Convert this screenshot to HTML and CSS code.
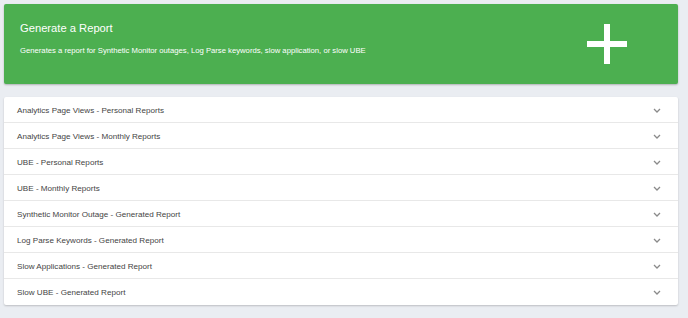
FILE: index.html
```html
<!DOCTYPE html>
<html lang="en">
<head>
    <meta charset="UTF-8">
    <meta name="viewport" content="width=device-width, initial-scale=1.0">
    <title>Reports</title>
    <link rel="stylesheet" href="styles.css">
</head>
<body>
    <div class="container">
        <a href="#" class="generate-card">
            <div class="generate-info">
                <h1>Generate a Report</h1>
                <p>Generates a report for Synthetic Monitor outages, Log Parse keywords, slow application, or slow UBE</p>
            </div>
            <svg class="plus-icon" width="40" height="40" viewBox="0 0 40 40">
                <rect x="17" y="0" width="6" height="40" fill="#fff"/>
                <rect x="0" y="17" width="40" height="6" fill="#fff"/>
            </svg>
        </a>

        <main class="report-list">
            <div class="report-row">
                <span>Analytics Page Views - Personal Reports</span>
                <svg class="chevron" width="8" height="5" viewBox="0 0 8 5"><path d="M1 1 L4 4 L7 1" fill="none" stroke="#8a8a8a" stroke-width="1.3"/></svg>
            </div>
            <div class="report-row">
                <span>Analytics Page Views - Monthly Reports</span>
                <svg class="chevron" width="8" height="5" viewBox="0 0 8 5"><path d="M1 1 L4 4 L7 1" fill="none" stroke="#8a8a8a" stroke-width="1.3"/></svg>
            </div>
            <div class="report-row">
                <span>UBE - Personal Reports</span>
                <svg class="chevron" width="8" height="5" viewBox="0 0 8 5"><path d="M1 1 L4 4 L7 1" fill="none" stroke="#8a8a8a" stroke-width="1.3"/></svg>
            </div>
            <div class="report-row">
                <span>UBE - Monthly Reports</span>
                <svg class="chevron" width="8" height="5" viewBox="0 0 8 5"><path d="M1 1 L4 4 L7 1" fill="none" stroke="#8a8a8a" stroke-width="1.3"/></svg>
            </div>
            <div class="report-row">
                <span>Synthetic Monitor Outage - Generated Report</span>
                <svg class="chevron" width="8" height="5" viewBox="0 0 8 5"><path d="M1 1 L4 4 L7 1" fill="none" stroke="#8a8a8a" stroke-width="1.3"/></svg>
            </div>
            <div class="report-row">
                <span>Log Parse Keywords - Generated Report</span>
                <svg class="chevron" width="8" height="5" viewBox="0 0 8 5"><path d="M1 1 L4 4 L7 1" fill="none" stroke="#8a8a8a" stroke-width="1.3"/></svg>
            </div>
            <div class="report-row">
                <span>Slow Applications - Generated Report</span>
                <svg class="chevron" width="8" height="5" viewBox="0 0 8 5"><path d="M1 1 L4 4 L7 1" fill="none" stroke="#8a8a8a" stroke-width="1.3"/></svg>
            </div>
            <div class="report-row">
                <span>Slow UBE - Generated Report</span>
                <svg class="chevron" width="8" height="5" viewBox="0 0 8 5"><path d="M1 1 L4 4 L7 1" fill="none" stroke="#8a8a8a" stroke-width="1.3"/></svg>
            </div>
        </main>
    </div>
</body>
</html>
```

FILE: styles.css
```css
:root {
    --green: #4caf50;
    --bg-color: #eaedf2;
    --text-color: #444;
    --line-color: #e8e8e8;
}

* {
    margin: 0;
    padding: 0;
    box-sizing: border-box;
    font-family: 'Liberation Sans', Arial, sans-serif;
}

body {
    background-color: var(--bg-color);
    color: var(--text-color);
    min-height: 100vh;
}

.container {
    width: 688px;
    padding: 4px 10px 0 4px;
}

.generate-card {
    background: var(--green);
    color: #fff;
    height: 80px;
    border-radius: 2px;
    text-decoration: none;
    display: flex;
    justify-content: space-between;
    padding: 0 51px 0 16px;
    box-shadow: 0 1px 2px rgba(0, 0, 0, 0.25);
}

.generate-info h1 {
    font-size: 11.2px;
    font-weight: 400;
    margin-top: 17px;
    line-height: 14px;
}

.generate-info p {
    font-size: 7.7px;
    margin-top: 11px;
    line-height: 10px;
}

.plus-icon {
    margin-top: 20px;
}

.report-list {
    margin-top: 13px;
    background: #fff;
    border-radius: 2px;
    box-shadow: 0 1px 2px rgba(0, 0, 0, 0.2);
}

.report-row {
    height: 26px;
    display: flex;
    align-items: center;
    justify-content: space-between;
    padding: 1px 16px 0 13px;
    font-size: 8.1px;
    border-bottom: 1px solid var(--line-color);
}

.report-row:last-child {
    border-bottom: none;
}

.chevron {
    margin-right: 1px;
}
```
